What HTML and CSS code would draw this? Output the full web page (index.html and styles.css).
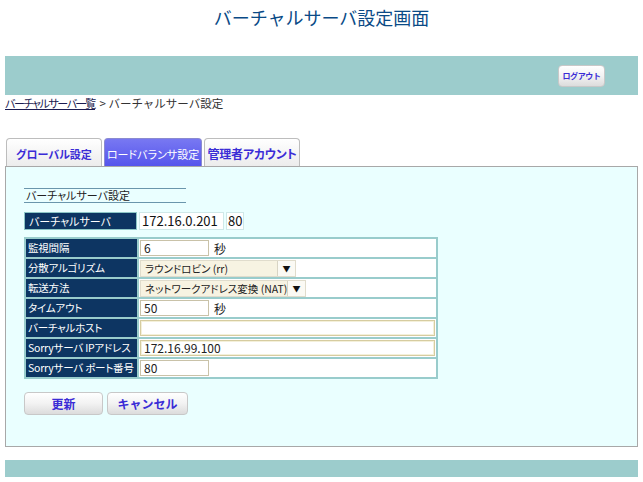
FILE: index.html
```html
<!DOCTYPE html>
<html lang="ja">
<head>
<meta charset="utf-8">
<title>バーチャルサーバ設定画面</title>
<link rel="stylesheet" href="styles.css">
</head>
<body>
<h1 class="title">バーチャルサーバ設定画面</h1>
<div class="topbar">
  <button class="btn btn-logout">ログアウト</button>
</div>
<div class="breadcrumb"><a href="#">バーチャルサーバ一覧</a> &gt; バーチャルサーバ設定</div>

<div class="tabs">
  <div class="tab">グローバル設定</div>
  <div class="tab tab-active">ロードバランサ設定</div>
  <div class="tab tab-big">管理者アカウント</div>
</div>

<div class="panel">
  <div class="section-title">バーチャルサーバ設定</div>
  <div class="vs-row">
    <div class="vs-label">バーチャルサーバ</div>
    <div class="vs-value vs-ip">172.16.0.201</div>
    <div class="vs-value vs-port">80</div>
  </div>

  <table class="form-table">
    <tr>
      <th>監視間隔</th>
      <td><span class="input input-short">6</span><span class="unit">秒</span></td>
    </tr>
    <tr>
      <th>分散アルゴリズム</th>
      <td><span class="select select-rr"><span class="select-text">ラウンドロビン (rr)</span><span class="select-arrow">▼</span></span></td>
    </tr>
    <tr>
      <th>転送方法</th>
      <td><span class="select select-nat"><span class="select-text">ネットワークアドレス変換 (NAT)</span><span class="select-arrow">▼</span></span></td>
    </tr>
    <tr>
      <th>タイムアウト</th>
      <td><span class="input input-short">50</span><span class="unit">秒</span></td>
    </tr>
    <tr>
      <th>バーチャルホスト</th>
      <td><span class="input input-long"></span></td>
    </tr>
    <tr>
      <th>Sorryサーバ IPアドレス</th>
      <td><span class="input input-long">172.16.99.100</span></td>
    </tr>
    <tr>
      <th>Sorryサーバ ポート番号</th>
      <td><span class="input input-short">80</span></td>
    </tr>
  </table>

  <div class="actions">
    <button class="btn btn-action btn-update">更新</button>
    <button class="btn btn-action btn-cancel">キャンセル</button>
  </div>
</div>

<div class="footer-bar"></div>
</body>
</html>
```

FILE: styles.css
```css
* { box-sizing: border-box; }

body {
  margin: 0;
  background: #ffffff;
  font-family: "Noto Sans CJK JP", "Noto Sans", sans-serif;
  font-feature-settings: "palt";
  color: #222;
}

.title {
  margin: 3px 0 0;
  height: 53px;
  font-size: 18px;
  line-height: 28px;
  font-weight: normal;
  text-align: center;
  color: #0a4a86;
  font-feature-settings: normal;
}

.topbar {
  margin: 0 5px;
  height: 39px;
  background: #9ccccc;
  display: flex;
  align-items: center;
  justify-content: flex-end;
  padding-right: 33px;
}

.btn {
  font-family: "Noto Sans CJK JP", sans-serif;
  font-weight: bold;
  color: #3a2cd6;
  background: linear-gradient(#ffffff, #f2f2f2 50%, #dcdcdc);
  border: 1px solid #c8c8c8;
  border-radius: 4px;
  padding: 0;
  cursor: pointer;
}

.btn-logout {
  width: 47px;
  height: 22px;
  font-size: 8px;
  letter-spacing: -0.4px;
}

.breadcrumb {
  margin: 1px 0 0 5px;
  height: 14px;
  font-size: 11.5px;
  line-height: 14px;
  color: #333;
  font-feature-settings: normal;
}

.breadcrumb a {
  color: #1a1a50;
  text-decoration: underline;
  font-size: 11px;
  font-feature-settings: "palt";
  letter-spacing: -1.4px;
  margin-right: 2px;
}

.tabs {
  display: flex;
  gap: 2px;
  margin: 28px 0 0 6px;
  height: 28px;
  align-items: flex-end;
}

.tab {
  width: 96px;
  height: 28px;
  padding-top: 6px;
  text-align: center;
  font-size: 11px;
  line-height: 18px;
  font-weight: bold;
  color: #3a2cd6;
  background: linear-gradient(#ffffff, #ececec);
  border: 1px solid #bdbdbd;
  border-bottom: none;
  border-radius: 4px 4px 0 0;
}

.tab-active {
  width: 98px;
  color: #ffffff;
  font-weight: normal;
  background: linear-gradient(#7878f2, #5555ec);
  border-color: #8a8ad0;
}

.tab-big {
  width: 96px;
  font-size: 12px;
  letter-spacing: -0.2px;
}

.panel {
  margin: 0 5px;
  height: 281px;
  background: #eaffff;
  border: 1px solid #a8a8a8;
  padding: 21px 18px 0;
}

.section-title {
  width: 162px;
  height: 15px;
  border-top: 1px solid #6a96ac;
  border-bottom: 1px solid #6a96ac;
  font-size: 11px;
  line-height: 13px;
  padding-left: 2px;
  color: #222;
}

.vs-row {
  display: flex;
  margin-top: 9px;
  height: 18px;
}

.vs-label {
  width: 113px;
  background: #0d3562;
  border: 1px solid #8cc6c6;
  color: #ffffff;
  font-size: 11px;
  line-height: 16px;
  padding-left: 4px;
}

.vs-value {
  background: #ffffff;
  border: 1px solid #cfe8e8;
  font-size: 13px;
  line-height: 16px;
  padding-left: 2px;
  color: #111;
  margin-left: 2px;
}

.vs-ip { width: 85px; }
.vs-port { width: 18px; padding-left: 1px; }

.form-table {
  margin-top: 7px;
  width: 414px;
  table-layout: fixed;
  border-collapse: separate;
  border-spacing: 2px;
  background: #99cccc;
}

.form-table th,
.form-table td {
  height: 18px;
  padding: 0;
  vertical-align: middle;
}

.form-table th {
  width: 111px;
  background: #0d3562;
  color: #ffffff;
  font-size: 10.5px;
  font-weight: normal;
  text-align: left;
  padding-left: 2px;
  white-space: nowrap;
  overflow: hidden;
  letter-spacing: -0.2px;
  line-height: 18px;
}

.form-table td {
  background: #ffffff;
  padding-left: 1px;
  font-size: 0;
}

.input {
  display: inline-block;
  vertical-align: middle;
  height: 16px;
  background: #ffffff;
  border: 1px solid #c9c2a8;
  font-size: 12px;
  line-height: 14px;
  padding-left: 3px;
  color: #222;
}

.input-short { width: 69px; }

.input-long {
  width: 295px;
  height: 16px;
  border: 1px solid #d6cca0;
  box-shadow: inset 0 0 0 1px #f4f0da;
}

.unit {
  display: inline-block;
  vertical-align: middle;
  font-size: 12px;
  margin-left: 5px;
  color: #222;
}

.select {
  display: inline-flex;
  vertical-align: middle;
  height: 17px;
  background: #f7f3e2;
  border: 1px solid #e0dccc;
  font-size: 10.5px;
  line-height: 15px;
}

.select-rr { width: 156px; }
.select-nat { width: 166px; }

.select-text {
  flex: 1;
  padding-left: 4px;
  white-space: nowrap;
  overflow: hidden;
  color: #222;
}

.select-arrow {
  flex: none;
  width: 18px;
  border-left: 1px solid #d8d4c4;
  background: #fbfaf4;
  text-align: center;
  font-size: 8px;
  line-height: 15px;
  color: #111;
}

.actions {
  display: flex;
  gap: 4px;
  margin-top: 13px;
}

.btn-action {
  height: 23px;
  font-size: 12px;
}

.btn-update { width: 79px; }
.btn-cancel { width: 81px; }

.footer-bar {
  margin: 13px 5px 0;
  height: 17px;
  background: #9ccccc;
}
```
